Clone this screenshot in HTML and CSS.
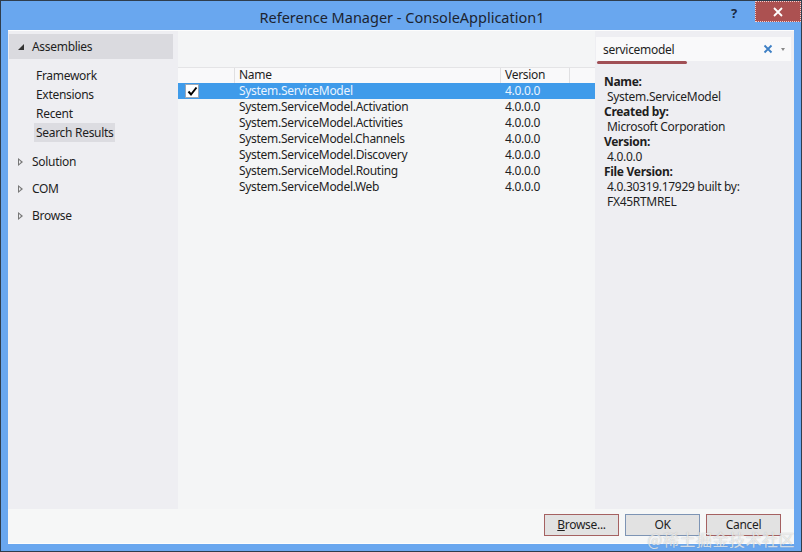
FILE: index.html
```html
<!DOCTYPE html>
<html>
<head>
<meta charset="utf-8">
<link rel="stylesheet" href="styles.css">
</head>
<body>
<div class="window">
  <div class="titlebar">
    <div class="title">Reference Manager - ConsoleApplication1</div>
    <div class="help">?</div>
    <div class="close">
      <svg width="12" height="12" viewBox="0 0 12 12"><path d="M2 2 L10 10 M10 2 L2 10" stroke="#fff" stroke-width="1.8"/></svg>
    </div>
  </div>
  <div class="client">
    <div class="main">
      <div class="left">
        <div class="group open">
          <span class="tri-open"></span><span>Assemblies</span>
        </div>
        <div class="sub">
          <div class="subitem">Framework</div>
          <div class="subitem">Extensions</div>
          <div class="subitem">Recent</div>
          <div class="subitem sel">Search Results</div>
        </div>
        <div class="group"><span class="tri-closed"></span><span>Solution</span></div>
        <div class="group"><span class="tri-closed"></span><span>COM</span></div>
        <div class="group"><span class="tri-closed"></span><span>Browse</span></div>
      </div>
      <div class="center">
        <div class="topstrip"></div>
        <div class="list">
          <div class="hdr">
            <div class="c-chk"></div>
            <div class="c-name">Name</div>
            <div class="c-ver">Version</div>
            <div class="c-rest"></div>
          </div>
          <div class="row selected">
            <div class="c-chk"><span class="box"><svg width="11" height="11" viewBox="0 0 11 11"><path d="M1.5 5.5 L4 8.5 L9.5 1.5" stroke="#000" stroke-width="2" fill="none"/></svg></span></div>
            <div class="c-name">System.ServiceModel</div>
            <div class="c-ver">4.0.0.0</div>
          </div>
          <div class="row"><div class="c-chk"></div><div class="c-name">System.ServiceModel.Activation</div><div class="c-ver">4.0.0.0</div></div>
          <div class="row"><div class="c-chk"></div><div class="c-name">System.ServiceModel.Activities</div><div class="c-ver">4.0.0.0</div></div>
          <div class="row"><div class="c-chk"></div><div class="c-name">System.ServiceModel.Channels</div><div class="c-ver">4.0.0.0</div></div>
          <div class="row"><div class="c-chk"></div><div class="c-name">System.ServiceModel.Discovery</div><div class="c-ver">4.0.0.0</div></div>
          <div class="row"><div class="c-chk"></div><div class="c-name">System.ServiceModel.Routing</div><div class="c-ver">4.0.0.0</div></div>
          <div class="row"><div class="c-chk"></div><div class="c-name">System.ServiceModel.Web</div><div class="c-ver">4.0.0.0</div></div>
        </div>
      </div>
      <div class="right">
        <div class="search">
          <span class="query">servicemodel</span>
          <span class="clear">
            <svg width="10" height="10" viewBox="0 0 10 10"><path d="M1.5 1.5 L8.5 8.5 M8.5 1.5 L1.5 8.5" stroke="#3d7fc4" stroke-width="1.8"/></svg>
          </span>
          <span class="drop"></span>
        </div>
        <div class="details">
          <div class="lbl">Name:</div>
          <div class="val">System.ServiceModel</div>
          <div class="lbl">Created by:</div>
          <div class="val">Microsoft Corporation</div>
          <div class="lbl">Version:</div>
          <div class="val">4.0.0.0</div>
          <div class="lbl">File Version:</div>
          <div class="val">4.0.30319.17929 built by:</div>
          <div class="val">FX45RTMREL</div>
        </div>
      </div>
    </div>
    <div class="footer">
      <button class="btn alt"><u>B</u>rowse...</button>
      <button class="btn def">OK</button>
      <button class="btn alt">Cancel</button>
    </div>
  </div>
  <div class="watermark">@稀土掘金技术社区</div>
</div>
</body>
</html>
```
FILE: styles.css
```css
* { box-sizing: border-box; }
html, body { margin: 0; padding: 0; }
body {
  width: 802px;
  height: 552px;
  overflow: hidden;
  font-family: "Noto Sans", "Open Sans", sans-serif;
  font-size: 12px;
  letter-spacing: -0.3px;
  color: #1e1e1e;
}
.window {
  position: relative;
  width: 802px;
  height: 552px;
  background: #69a7ef;
  border: 1px solid #2f3d4c;
  display: flex;
  flex-direction: column;
  padding: 0 7px 7px 7px;
}
.titlebar {
  height: 29px;
  flex: none;
  display: flex;
  align-items: center;
  position: relative;
}
.title {
  flex: 1;
  text-align: center;
  font-size: 14.5px;
  letter-spacing: 0;
  color: #1c2430;
  padding-left: 72px;
  padding-top: 2px;
}
.help {
  width: 20px;
  font-weight: bold;
  font-size: 13px;
  color: #1a2a44;
  margin-right: 11px;
  margin-top: -6px;
  text-align: center;
}
.close {
  width: 46px;
  height: 21px;
  background: #ac5151;
  border: 1px dotted #f0d0d0;
  align-self: flex-start;
  display: flex;
  align-items: center;
  justify-content: center;
  margin-right: -7px;
}
.client {
  flex: 1;
  display: flex;
  flex-direction: column;
  background: #f6f7f7;
  border-top: 1px solid #fdfdfd;
}
.main {
  height: 478px;
  display: flex;
  flex: none;
}
.left {
  width: 170px;
  background: #eeeef2;
  padding-top: 3px;
}
.group {
  height: 27px;
  display: flex;
  align-items: center;
  padding-left: 10px;
  color: #1e1e1e;
}
.group.open {
  background: #dadadf;
  height: 25px;
  width: 164px;
  margin-left: 1px;
  padding-left: 9px;
}
.tri-open {
  width: 0; height: 0;
  border-left: 6px solid transparent;
  border-bottom: 6px solid #333;
  margin-right: 8px;
  margin-top: 1px;
}
.tri-closed {
  width: 0; height: 0;
  border-top: 4px solid transparent;
  border-bottom: 4px solid transparent;
  border-left: 5px solid #777;
  margin-right: 9px;
  position: relative;
}
.tri-closed::after {
  content: "";
  position: absolute;
  left: -4px; top: -2px;
  border-top: 2px solid transparent;
  border-bottom: 2px solid transparent;
  border-left: 2.5px solid #eeeef2;
}
.sub {
  padding: 7px 0 6px 26px;
}
.subitem {
  height: 19px;
  line-height: 19px;
  padding-left: 2px;
}
.subitem.sel {
  background: #dcdce1;
  display: inline-block;
  padding: 0 2px;
}
.center {
  width: 417px;
  display: flex;
  flex-direction: column;
  background: #f4f5f6;
}
.topstrip { height: 36px; flex: none; }
.list { flex: 1; }
.hdr {
  height: 16px;
  display: flex;
  background: #f9f9fa;
  border-top: 1px solid #e4e4e6;
  color: #1e1e1e;
}
.hdr > div {
  border-right: 1px solid #e0e0e2;
  line-height: 14px;
}
.c-chk { width: 57px; flex: none; padding-left: 7px; }
.c-name { width: 266px; flex: none; padding-left: 4px; white-space: nowrap; }
.c-ver { width: 69px; flex: none; padding-left: 4px; }
.c-rest { width: 25px; flex: none; }
.hdr .c-rest { border-right: none; }
.row {
  height: 16px;
  display: flex;
  line-height: 16px;
}
.row.selected {
  background: #3f9bea;
  color: #eaf4ff;
}
.box {
  display: inline-flex;
  width: 14px;
  height: 14px;
  background: #fff;
  border: 1px solid #9aa8b8;
  align-items: center;
  justify-content: center;
  margin-top: 1px;
  vertical-align: top;
}
.right {
  width: 199px;
  background: #eeeef2;
  padding: 6px 3px 0 1px;
}
.search {
  height: 24px;
  background: #f9f9fa;
  display: flex;
  align-items: center;
  position: relative;
  padding-left: 7px;
}
.query {
  flex: 1;
  position: relative;
}
.query::after {
  content: "";
  position: absolute;
  left: -6px;
  bottom: -6px;
  width: 90px;
  height: 3px;
  border-radius: 2px;
  background: #a04f55;
}
.clear { width: 12px; display: flex; margin-right: 6px; }
.drop {
  width: 0; height: 0;
  border-left: 2.5px solid transparent;
  border-right: 2.5px solid transparent;
  border-top: 3px solid #888;
  margin-right: 6px;
}
.details {
  padding: 13px 0 0 8px;
  line-height: 15px;
}
.lbl { font-weight: bold; }
.val { padding-left: 3px; }
.footer {
  flex: 1;
  display: flex;
  justify-content: flex-end;
  align-items: flex-start;
  padding: 5px 13px 0 0;
  gap: 6px;
  border-bottom: 1px solid #fdfdfd;
}
.btn {
  width: 75px;
  height: 22px;
  background: #e2e2e2;
  font-family: "Noto Sans", "Open Sans", sans-serif;
  font-size: 12px;
  letter-spacing: -0.3px;
  color: #1e1e1e;
  padding: 0;
  line-height: 18px;
}
.btn.alt { border: 1px solid #a56161; }
.btn.def { border: 1px solid #7d94b4; }
.watermark {
  position: absolute;
  right: 6px;
  bottom: 0px;
  font-family: "Noto Sans CJK SC", sans-serif;
  font-size: 16px;
  letter-spacing: 0.5px;
  color: rgba(255,255,255,0.7);
  text-shadow: 0 0 1px rgba(110,110,110,0.5);
}
```
